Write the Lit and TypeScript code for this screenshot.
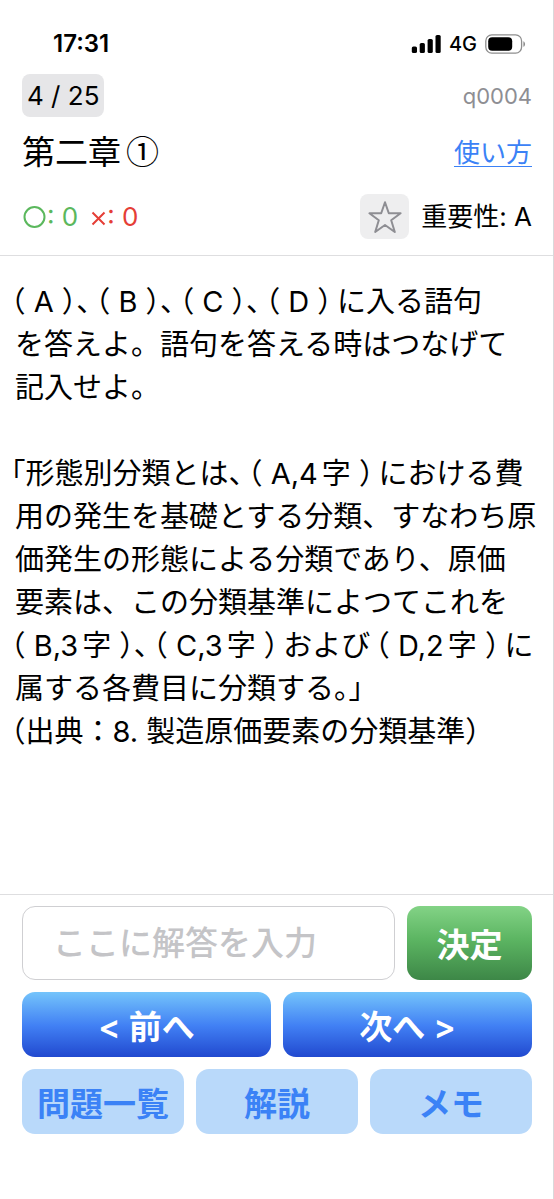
import { LitElement, html, css } from "lit";
import { customElement, state } from "lit/decorators.js";

@customElement("status-bar")
class StatusBar extends LitElement {
  static styles = css`
    :host {
      display: flex;
      justify-content: space-between;
      align-items: center;
      height: 28px;
      padding: 30px 27px 0 53px;
    }
    .time {
      font-size: 24px;
      font-weight: 600;
      line-height: 28px;
    }
    .icons {
      display: flex;
      align-items: center;
      gap: 8px;
    }
    .network {
      font-size: 20px;
      font-weight: 500;
      line-height: 28px;
    }
    svg {
      display: block;
    }
  `;

  render() {
    return html`
      <span class="time">17:31</span>
      <span class="icons">
        <svg width="30" height="20" viewBox="0 0 30 20" role="img" aria-label="signal">
          <rect x="0.8" y="12.5" width="5.2" height="6.5" rx="1.6" />
          <rect x="8.7" y="9" width="5.2" height="10" rx="1.6" />
          <rect x="16.6" y="5" width="5.2" height="14" rx="1.6" />
          <rect x="24.5" y="1" width="5.2" height="18" rx="1.6" />
        </svg>
        <span class="network">4G</span>
        <svg width="41" height="20" viewBox="0 0 41 20" role="img" aria-label="battery">
          <rect x="0.8" y="0.9" width="35.8" height="18.2" rx="6" fill="none" stroke="#8d8d8d" stroke-width="1.3" />
          <rect x="3.2" y="3.3" width="24" height="13.4" rx="4" />
          <path d="M38.4 7.2c2.2.9 2.2 4.7 0 5.6z" fill="#8d8d8d" />
        </svg>
      </span>
    `;
  }
}

@customElement("question-text")
class QuestionText extends LitElement {
  static styles = css`
    :host {
      display: block;
      padding: 24px 15px;
      font-size: 29px;
      line-height: 43px;
      text-spacing-trim: space-all;
    }
    p {
      margin: 0 0 43px;
      white-space: nowrap;
    }
    p:last-child {
      margin: 0;
    }
    .line {
      display: block;
    }
    /* Lines that open with a bracket hang slightly into the margin. */
    .hang {
      margin-left: -4px;
    }
    .half {
      font-feature-settings: "halt";
    }
    .blank {
      margin-right: 5px;
      font-feature-settings: "halt";
    }
    .count {
      margin-right: 4px;
    }
  `;

  private blank(text: string, count = "", rest = "") {
    return html`<span class="blank">${text}${count ? html`<span class="count">${count}</span>` : ""}${rest}</span>`;
  }

  render() {
    return html`
      <p>
        <span class="line hang">${this.blank("（ A ）、")}${this.blank("（ B ）、")}${this.blank("（ C ）、")}${this.blank("（ D ）")}に入る語句</span>
        <span class="line">を答えよ。語句を答える時はつなげて</span>
        <span class="line">記入せよ。</span>
      </p>
      <p>
        <span class="line hang"><span class="half">「</span>形態別分類と${this.blank("は、")}${this.blank("（ A,", "4", "字 ）")}における費</span>
        <span class="line">用の発生を基礎とする分類、すなわち原</span>
        <span class="line">価発生の形態による分類であり、原価</span>
        <span class="line">要素は、この分類基準によつてこれを</span>
        <span class="line hang">${this.blank("（ B,", "3", "字 ）、")}${this.blank("（ C,", "3", "字 ）")}およ${this.blank("び")}${this.blank("（ D,", "2", "字 ）")}に</span>
        <span class="line">属する各費目に分類する<span class="half">。」</span></span>
        <span class="line hang"><span class="half">（</span>出典：8. 製造原価要素の分類基準<span class="half">）</span></span>
      </p>
    `;
  }
}

@customElement("app-root")
class AppRoot extends LitElement {
  static styles = css`
    :host {
      display: flex;
      flex-direction: column;
      box-sizing: border-box;
      min-height: 100vh;
      border-right: 1px solid #d9d9db;
      background: #fff;
      color: #000;
      font-family: Inter, "Noto Sans CJK JP", sans-serif;
    }
    header {
      display: flex;
      flex-direction: column;
      padding: 16px 21px 16px 22px;
      border-bottom: 1px solid #dedee0;
    }
    .row {
      display: flex;
      justify-content: space-between;
      align-items: center;
    }
    .title {
      margin-bottom: 11px;
    }
    .counter {
      padding: 0 5px;
      border-radius: 8px;
      background: #e6e6e8;
      font-size: 26px;
      line-height: 43px;
    }
    .code {
      color: #8e8e93;
      font-size: 22px;
    }
    h1 {
      display: flex;
      gap: 5px;
      margin: 0;
      font-family: "Noto Sans CJK JP", sans-serif;
      font-size: 33px;
      font-weight: 400;
      line-height: 66px;
    }
    .help {
      color: #3b82f6;
      font-size: 26px;
      text-decoration-thickness: 1px;
      text-underline-offset: 4px;
    }
    .score {
      display: flex;
      gap: 13px;
      font-size: 26px;
    }
    .score span {
      display: flex;
      align-items: center;
      gap: 1px;
    }
    .right {
      color: #5bb85d;
    }
    .wrong {
      color: #e53e36;
    }
    .rank {
      display: flex;
      align-items: center;
      gap: 12px;
      font-size: 26px;
      line-height: 45px;
    }
    button,
    input {
      box-sizing: border-box;
      margin: 0;
      border: 0;
      font: inherit;
    }
    .star {
      display: flex;
      align-items: center;
      justify-content: center;
      width: 49px;
      height: 45px;
      padding: 0;
      border-radius: 8px;
      background: #eeeeef;
    }
    main {
      flex: 1;
    }
    footer {
      display: grid;
      grid-template-columns: minmax(0, 1fr);
      gap: 12px;
      padding: 11px 21px 65px 22px;
      border-top: 1px solid #dedee0;
      font-size: 33px;
      font-weight: 500;
    }
    .bar {
      display: flex;
      gap: 12px;
    }
    .bar > * {
      flex: 1;
      min-width: 0;
      height: 65px;
      padding: 0;
      border-radius: 13px;
    }
    .bar > .answer {
      height: 74px;
      padding: 0 30px;
      border: 1px solid #cfcfd2;
      background: #fff;
      color: #000;
    }
    .answer::placeholder {
      color: #c4c4c7;
      opacity: 1;
    }
    .bar > .submit {
      flex: 0 0 125px;
      height: 74px;
      background: linear-gradient(#83d386, #5cb562 45%, #3d8747);
      color: #fff;
    }
    button {
      font-weight: 600;
    }
    .nav {
      background: linear-gradient(#74c4fb, #4180f4 52%, #2149cf);
      color: #fff;
    }
    .tool {
      background: #b9d9fa;
      color: #3b82f6;
    }
  `;

  @state() private starred = false;

  render() {
    return html`
      <status-bar></status-bar>
      <header>
        <div class="row">
          <span class="counter">4 / 25</span>
          <span class="code">q0004</span>
        </div>
        <div class="row title">
          <h1><span>第二章</span><span>①</span></h1>
          <a class="help" href="#help">使い方</a>
        </div>
        <div class="row">
          <div class="score">
            <span class="right">
              <svg width="24" height="24" viewBox="0 0 24 24" aria-hidden="true">
                <circle cx="12.5" cy="12" r="10" fill="none" stroke="currentColor" stroke-width="2" />
              </svg>: 0
            </span>
            <span class="wrong">
              <svg width="15" height="24" viewBox="0 0 15 24" aria-hidden="true">
                <path d="M1.5 7.5l12 12M13.5 7.5l-12 12" fill="none" stroke="currentColor" stroke-width="2" />
              </svg>: 0
            </span>
          </div>
          <div class="rank">
            <button class="star" aria-label="お気に入り" aria-pressed=${this.starred} @click=${() => (this.starred = !this.starred)}>
              <svg width="36" height="34" viewBox="0 0 36 34" aria-hidden="true">
                <path
                  d="M18 2.2L21.8 13.3H33.6L24.2 20.3L27.8 32L18 25L8.2 32L11.8 20.3L2.4 13.3H14.2Z"
                  fill=${this.starred ? "#8e8e93" : "none"}
                  stroke="#8e8e93"
                  stroke-width="2"
                  stroke-linejoin="round"
                />
              </svg>
            </button>
            <span>重要性: A</span>
          </div>
        </div>
      </header>
      <main><question-text></question-text></main>
      <footer>
        <div class="bar">
          <input class="answer" type="text" aria-label="解答" placeholder="ここに解答を入力" />
          <button class="submit">決定</button>
        </div>
        <div class="bar">
          <button class="nav">&lt; 前へ</button>
          <button class="nav">次へ &gt;</button>
        </div>
        <div class="bar">
          <button class="tool">問題一覧</button>
          <button class="tool">解説</button>
          <button class="tool">メモ</button>
        </div>
      </footer>
    `;
  }
}
